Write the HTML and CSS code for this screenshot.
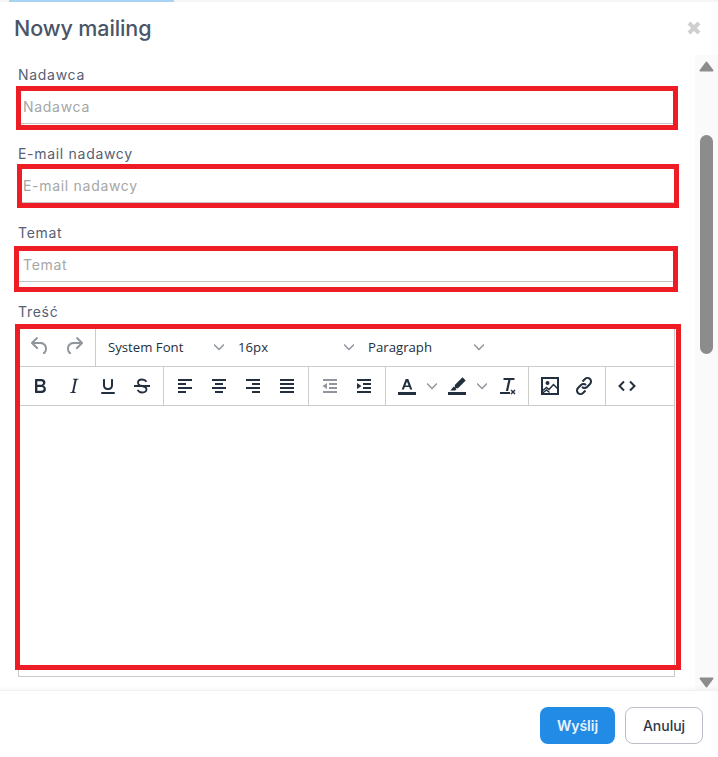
FILE: index.html
```html
<!DOCTYPE html>
<html lang="pl">
<head>
<meta charset="utf-8">
<title>Nowy mailing</title>
<link rel="stylesheet" href="styles.css">
</head>
<body>
<div class="page">
  <div class="strip"><span class="chip"></span></div>
  <header class="head">
    <h1 class="title">Nowy mailing</h1>
    <svg class="close" viewBox="0 0 16 16"><path d="M3 3l10 10M13 3L3 13"/></svg>
  </header>
  <div class="middle">
    <main class="form">
      <div class="field">
        <label class="label">Nadawca</label>
        <div class="control"><input class="input" placeholder="Nadawca"><span class="mark mark-a"></span></div>
      </div>
      <div class="field">
        <label class="label">E-mail nadawcy</label>
        <div class="control"><input class="input" placeholder="E-mail nadawcy"><span class="mark mark-b"></span></div>
      </div>
      <div class="field">
        <label class="label">Temat</label>
        <div class="control"><input class="input" placeholder="Temat"><span class="mark mark-c"></span></div>
      </div>
      <div class="field">
        <label class="label">Treść</label>
        <div class="control">
          <div class="editor">
            <div class="row">
              <div class="group">
                <span class="btn off"><svg class="ic" viewBox="0 0 24 24"><path d="M6.4 8H12c3.700 0 6.200 2 6.800 5.100.6 2.700-.4 5.600-2.300 6.800a1 1 0 0 1-1-1.800c1.100-.6 1.800-2.700 1.400-4.600-.5-2.100-2.100-3.500-4.900-3.500H6.400l3.300 3.300a1 1 0 1 1-1.400 1.400l-5-5a1 1 0 0 1 0-1.400l5-5a1 1 0 0 1 1.400 1.400L6.400 8z"/></svg></span>
                <span class="btn off"><svg class="ic" viewBox="0 0 24 24"><path d="M17.600 8H12c-3.700 0-6.200 2-6.800 5.100-.6 2.700.4 5.600 2.300 6.800a1 1 0 0 0 1-1.800c-1.100-.6-1.800-2.700-1.400-4.600.5-2.100 2.100-3.500 4.900-3.500h5.600l-3.300 3.300a1 1 0 1 0 1.400 1.400l5-5a1 1 0 0 0 0-1.400l-5-5a1 1 0 0 0-1.400 1.400L17.600 8z"/></svg></span>
              </div>
              <div class="select"><span>System Font</span><svg class="chev" viewBox="0 0 10 10"><path d="M0 2.500l5 5 5-5"/></svg></div>
              <div class="select"><span>16px</span><svg class="chev" viewBox="0 0 10 10"><path d="M0 2.500l5 5 5-5"/></svg></div>
              <div class="select"><span>Paragraph</span><svg class="chev" viewBox="0 0 10 10"><path d="M0 2.500l5 5 5-5"/></svg></div>
            </div>
            <div class="row row-b">
              <div class="group">
                <span class="btn"><svg class="ic" viewBox="0 0 24 24"><path d="M7.800 19c-.3 0-.5 0-.6-.2l-.2-.5V5.700c0-.2 0-.4.200-.5l.6-.2h5c1.500 0 2.700.3 3.500 1 .7.600 1.100 1.400 1.100 2.500a3 3 0 0 1-.6 1.900c-.4.600-1 1-1.600 1.200.4.100.9.300 1.300.6s.8.700 1 1.200c.3.400.4 1 .4 1.600 0 1.300-.4 2.300-1.300 3-.8.700-2 1-3.700 1H7.800zm5-8.300c.6 0 1.200-.1 1.600-.5.4-.3.6-.7.6-1.300 0-1.100-.8-1.700-2.300-1.700H9.300v3.500h3.500zm.5 6c.7 0 1.300-.1 1.700-.4.400-.4.600-.9.600-1.500s-.2-1-.7-1.400c-.4-.3-1-.4-2-.4H9.400v3.800h4z"/></svg></span>
                <span class="btn"><svg class="ic" viewBox="0 0 24 24"><path d="M16.700 4.700l-.1.900h-.3c-.6 0-1 0-1.400.3-.3.300-.4.600-.5 1.100l-2.100 9.800v.6c0 .5.400.8 1.400.8h.2l-.2.800H8l.2-.8h.2c1.100 0 1.800-.5 2-1.500l2-9.800.1-.5c0-.6-.4-.8-1.400-.8h-.3l.2-.9h5.800z"/></svg></span>
                <span class="btn"><svg class="ic" viewBox="0 0 24 24"><path d="M16 5c.6 0 1 .4 1 1v5.500c0 2.500-2 4.500-4.500 4.500h-1A4.500 4.500 0 0 1 7 11.500V6c0-.6.400-1 1-1s1 .4 1 1v5.500c0 1.400 1.100 2.500 2.500 2.500h1c1.400 0 2.500-1.100 2.500-2.500V6c0-.6.400-1 1-1zM6 18h12a1 1 0 0 1 0 2H6a1 1 0 0 1 0-2z"/></svg></span>
                <span class="btn"><svg class="ic ic-line" viewBox="0 0 24 24"><path class="mid" d="M16.500 7.800C15.600 6.300 14 5.500 12.200 5.500c-2.500 0-4.200 1.300-4.200 3.200 0 2 1.700 2.800 4 3.300 2.800.6 4.500 1.400 4.500 3.300 0 2-1.900 3.200-4.400 3.200-2 0-3.600-.9-4.600-2.400"/><path d="M4 12h16"/></svg></span>
              </div>
              <div class="group">
                <span class="btn"><svg class="ic" viewBox="0 0 24 24"><path d="M5 5h14v2H5zM5 9h8v2H5zM5 13h14v2H5zM5 17h8v2H5z"/></svg></span>
                <span class="btn"><svg class="ic" viewBox="0 0 24 24"><path d="M5 5h14v2H5zM8 9h8v2H8zM5 13h14v2H5zM8 17h8v2H8z"/></svg></span>
                <span class="btn"><svg class="ic" viewBox="0 0 24 24"><path d="M5 5h14v2H5zM11 9h8v2h-8zM5 13h14v2H5zM11 17h8v2h-8z"/></svg></span>
                <span class="btn"><svg class="ic" viewBox="0 0 24 24"><path d="M5 5h14v2H5zM5 9h14v2H5zM5 13h14v2H5zM5 17h14v2H5z"/></svg></span>
              </div>
              <div class="group">
                <span class="btn off"><svg class="ic" viewBox="0 0 24 24"><path d="M5 5h14v2H5zM11 9h8v2h-8zM11 13h8v2h-8zM5 17h14v2H5zM9 9v6l-4.500-3z"/></svg></span>
                <span class="btn"><svg class="ic" viewBox="0 0 24 24"><path d="M5 5h14v2H5zM11 9h8v2h-8zM11 13h8v2h-8zM5 17h14v2H5zM5 9v6l4.500-3z"/></svg></span>
              </div>
              <div class="group">
                <span class="split"><span class="btn"><svg class="ic" viewBox="0 0 24 24"><path d="M3 18h18v3H3zM10.700 5h2.600l4 10.500h-2.200l-.9-2.600H9.800l-.9 2.600H6.700zM12 7.400l-1.600 4h3.100z"/></svg></span><svg class="chev chev-s" viewBox="0 0 10 10"><path d="M0 2.500l5 5 5-5"/></svg></span>
                <span class="split"><span class="btn"><svg class="ic" viewBox="0 0 24 24"><path d="M3 18h18v3H3zM17.500 3.300l3.200 3.200-7.700 7.800H9.800v-3.200zM8.700 12.500l2.800 2.800-1.300 1.200H5.300z"/></svg></span><svg class="chev chev-s" viewBox="0 0 10 10"><path d="M0 2.500l5 5 5-5"/></svg></span>
                <span class="btn"><svg class="ic" viewBox="0 0 24 24"><path d="M8.500 4h11v2h-4l-2.400 11h-2.200l2.400-11H8.500zM5 18h10v2H5zM16.600 15.500l1.400 1.500 1.500-1.500 1 1-1.500 1.500 1.500 1.500-1 1-1.500-1.500-1.400 1.500-1-1 1.400-1.500-1.400-1.500z"/></svg></span>
              </div>
              <div class="group">
                <span class="btn"><svg class="ic ic-line" viewBox="0 0 24 24"><path d="M4 4h16v16H4z"/><circle class="dot" cx="9.500" cy="9" r="2"/><path class="thin" d="M4 17l4.500-3.500 2.500 2 4.500-5 4.500 4.500M4 19.500l4.500-3.500 3 2.500"/></svg></span>
                <span class="btn"><svg class="ic ic-line" viewBox="0 0 24 24"><path d="M10.500 7.500l2.500-2.500a3.500 3.500 0 0 1 5 5l-3 3a3.500 3.500 0 0 1-5 0M13.500 16.500L11 19a3.500 3.500 0 0 1-5-5l3-3a3.500 3.500 0 0 1 5 0"/></svg></span>
              </div>
              <div class="group group-end">
                <span class="btn"><svg class="ic ic-line" viewBox="0 0 24 24"><path d="M9 7.500L4.500 12 9 16.500M15 7.500l4.500 4.500-4.500 4.500"/></svg></span>
              </div>
            </div>
            <div class="area"></div>
          </div>
          <span class="mark mark-d"></span>
        </div>
      </div>
    </main>
    <aside class="scroll">
      <svg class="arrow" viewBox="0 0 15 11"><path d="M7.500 1.500L13.500 9.500H1.500z"/></svg>
      <span class="thumb"></span>
      <svg class="arrow arrow-down" viewBox="0 0 15 11"><path d="M7.500 9.500L13.500 1.500H1.500z"/></svg>
    </aside>
  </div>
  <footer class="foot">
    <button class="action primary">Wyślij</button>
    <button class="action ghost">Anuluj</button>
  </footer>
</div>
</body>
</html>
```

FILE: styles.css
```css
* { box-sizing: border-box; }
html, body { margin: 0; padding: 0; background: #fff; }
body { font-family: Inter, "Open Sans", sans-serif; color: #4a5568; }
.page { width: 718px; height: 757px; display: flex; flex-direction: column; overflow: hidden; }

.strip { height: 2px; background: #f5f5f5; padding-left: 9px; flex: none; }
.chip { display: block; width: 165px; height: 2px; background: #a9d3f3; }

.head { height: 53px; flex: none; display: flex; align-items: center; justify-content: space-between; padding: 0 16px 0 14px; }
.title { margin: 0 0 2px; font-size: 21.500px; line-height: 28px; font-weight: 500; letter-spacing: -0.1px; color: #4a5568; }
.close { width: 16px; height: 16px; margin-bottom: 1px; fill: none; stroke: #cfcfcf; stroke-width: 4; }

.middle { height: 635px; flex: none; display: flex; overflow: hidden; }
.form { flex: 1; min-width: 0; padding: 10px 21px 0 18px; }
.field { margin-bottom: 20px; }
.label { display: block; height: 23px; font-size: 14px; line-height: 20px; letter-spacing: 0.7px; color: #566074; }
.control { position: relative; }
.input { display: block; width: 100%; height: 36px; padding: 0 4px; border: 1px solid #fff; border-bottom-color: #c4c4c4; border-top-color: #c4c4c4; background: #fff; font: 14px/20px Inter, sans-serif; letter-spacing: 0.7px; outline: none; }
.input::placeholder { color: #a6a6a6; opacity: 1; }

.mark { position: absolute; border: 5px solid #ee1c25; pointer-events: none; }
.mark-a { left: -2px; top: -2px; width: 662px; height: 44px; }
.mark-b { left: -1px; top: -3px; width: 662px; height: 44px; }
.mark-c { left: -4px; top: 0; width: 664px; height: 46px; }
.mark-d { left: -3px; top: -1px; width: 666px; height: 346px; }

.editor { height: 352px; width: 657px; border: 1px solid #c9c9c9; font-family: "Open Sans", sans-serif; color: #222f3e; }
.row { display: flex; height: 41px; border-bottom: 1px solid #ccc; align-items: stretch; }
.row-b { height: 39px; }
.group { display: flex; align-items: center; padding: 0 4px; border-right: 1px solid #ccc; }
.group-end { border-right: 0; }
.btn { width: 34px; height: 34px; display: flex; align-items: center; justify-content: center; flex: none; }
.ic { width: 24px; height: 24px; fill: #222f3e; display: block; }
.ic-line { fill: none; stroke: #222f3e; stroke-width: 2; }
.ic-line .dot { fill: #222f3e; stroke: none; }
.ic-line .thin { stroke-width: 1.500; }
.ic-line .mid { stroke-width: 1.800; }
.off { opacity: 0.5; }
.split { display: flex; align-items: center; width: 50px; }
.select { width: 130px; display: flex; align-items: center; justify-content: space-between; padding: 2px 2px 0 12px; font-size: 13.200px; color: #222f3e; }
.chev { width: 10px; height: 10px; fill: none; stroke: #222f3e; stroke-width: 1.500; opacity: 0.5; }
.chev-s { margin-left: 3px; }
.area { height: 270px; }

.scroll { width: 23px; flex: none; background: #fafafa; display: flex; flex-direction: column; align-items: center; padding-top: 6px; }
.arrow { width: 15px; height: 11px; flex: none; display: block; fill: #8c8c8c; stroke: #8c8c8c; stroke-width: 2; stroke-linejoin: round; }
.arrow-down { margin-top: 323px; }
.thumb { width: 13px; height: 219px; margin-top: 63px; flex: none; background: #8c8c8c; border-radius: 7px; }

.foot { flex: 1; display: flex; justify-content: flex-end; align-items: flex-start; gap: 10px; padding: 16px 15px 0 0; border-top: 1px solid #f0f0f0; box-shadow: 0 -2px 3px rgba(0,0,0,0.03); position: relative; background: #fff; }
.action { height: 37px; border-radius: 8px; font: 600 14px/20px Inter, sans-serif; padding: 0; }
.primary { width: 75px; background: #228be6; border: 0; color: #e8f3fd; }
.ghost { width: 78px; background: #fff; border: 1px solid #b9bec7; color: #2d3748; font-weight: 500; }
```
